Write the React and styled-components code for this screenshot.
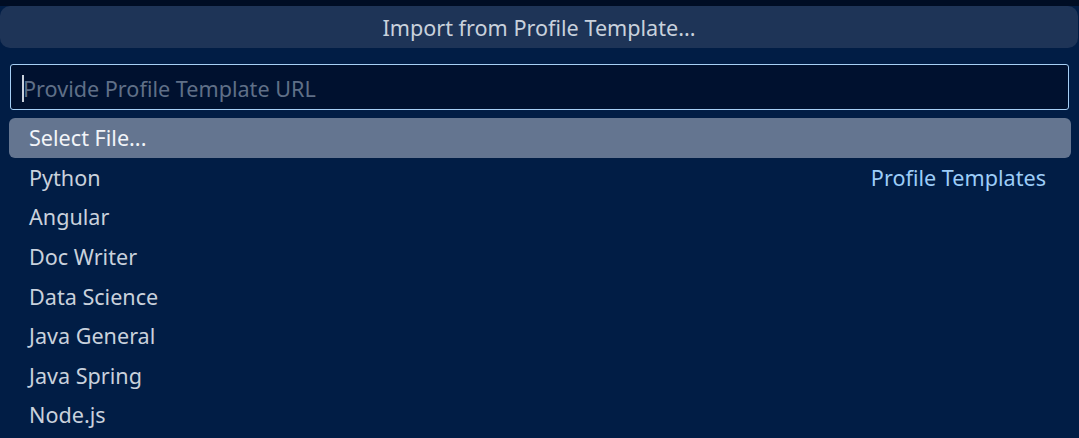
import React from 'react';
import styled, { createGlobalStyle } from 'styled-components';

const Global = createGlobalStyle`
  html, body { margin: 0; padding: 0; background: #011d45; }
  body { font-family: "Noto Sans", "Open Sans", sans-serif; }
`;

const Page = styled.div`
  width: 1079px;
  height: 438px;
  overflow: hidden;
  background: #011d45;
  display: flex;
  flex-direction: column;
  border-top: 6px solid #000d24;
  box-sizing: border-box;
`;

const Title = styled.div`
  flex: 0 0 42px;
  margin-right: 1px;
  background: #1e3457;
  border-radius: 10px;
  display: flex;
  align-items: center;
  justify-content: center;
  color: #c9d1dc;
  font-size: 21.6px;
`;

const InputWrap = styled.div`
  flex: 0 0 auto;
  position: relative;
  padding: 16px 10px 8px 10px;
`;

// drawn caret, the screenshot keeps the focused input's cursor visible
const Caret = styled.span`
  position: absolute;
  left: 22px;
  top: 27px;
  width: 2px;
  height: 27px;
  background: #c9d1dc;
  pointer-events: none;
`;

const Input = styled.input`
  width: 100%;
  box-sizing: border-box;
  height: 46px;
  background: #00112f;
  border: 1px solid #a6cff5;
  border-radius: 3px;
  padding: 2px 12px 0;
  font-family: inherit;
  font-size: 21.6px;
  color: #d0d8e4;
  outline: none;
  caret-color: transparent;

  &::placeholder { color: #5f6f87; }
`;

const List = styled.div`
  display: flex;
  flex-direction: column;
  padding: 0 8px 0 9px;
`;

const Row = styled.div`
  height: 39.6px;
  flex: 0 0 39.6px;
  display: flex;
  align-items: center;
  justify-content: space-between;
  padding: 0 25px 0 20px;
  border-radius: 6px;
  font-size: 21.6px;
  background: ${p => (p.$active ? '#647590' : 'transparent')};
  color: ${p => (p.$active ? '#f2f4f8' : '#c9d1dc')};
`;

const Label = styled.span`
  white-space: nowrap;
`;

const Group = styled.span`
  color: #9dcdf8;
  white-space: nowrap;
`;

const items = [
  { label: 'Select File...', active: true },
  { label: 'Python', group: 'Profile Templates' },
  { label: 'Angular' },
  { label: 'Doc Writer' },
  { label: 'Data Science' },
  { label: 'Java General' },
  { label: 'Java Spring' },
  { label: 'Node.js' },
];

export default function App() {
  return (
    <>
      <Global />
      <Page>
        <Title>Import from Profile Template...</Title>
        <InputWrap>
          <Input autoFocus placeholder="Provide Profile Template URL" />
          <Caret />
        </InputWrap>
        <List>
          {items.map(it => (
            <Row key={it.label} $active={it.active}>
              <Label>{it.label}</Label>
              {it.group && <Group>{it.group}</Group>}
            </Row>
          ))}
        </List>
      </Page>
    </>
  );
}
